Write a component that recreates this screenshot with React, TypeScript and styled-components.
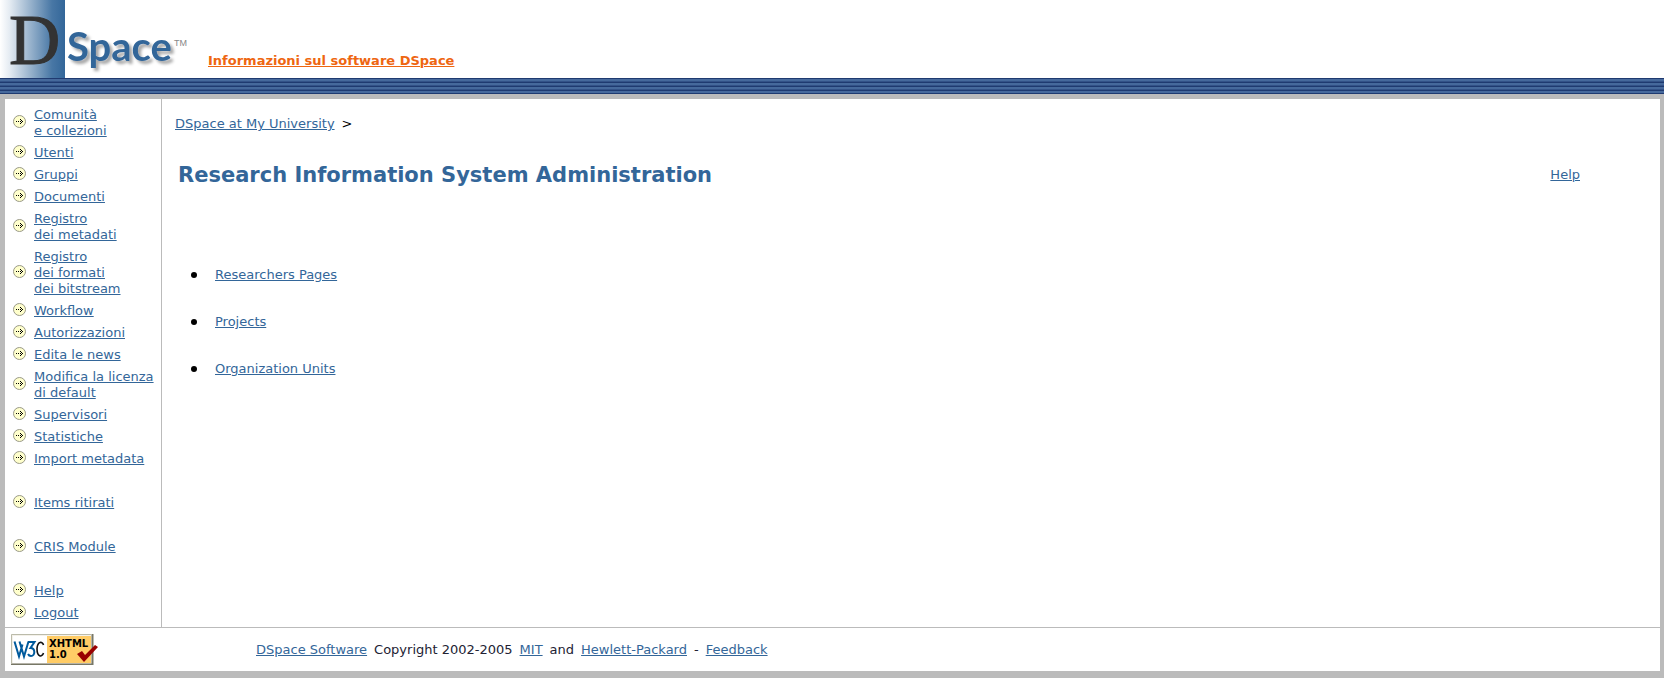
import React from "react";
import styled, { createGlobalStyle } from "styled-components";

const GlobalStyle = createGlobalStyle`
  body {
    margin: 0;
    background: #ffffff;
    color: #000000;
    font-family: Verdana, "DejaVu Sans", sans-serif;
    font-size: 13px;
    line-height: 16px;
  }
`;

const Link = styled.a`
  color: #336699;
  text-decoration: underline;
`;

const Header = styled.header`
  display: flex;
  align-items: flex-end;
  height: 78px;
`;

const Logo = styled.svg`
  display: block;
  flex: none;
  width: 208px;
  height: 78px;
`;

const Tagline = styled(Link)`
  margin-bottom: 9px;
  color: #ee6611;
  font-weight: bold;
`;

const Stripes = styled.div`
  box-sizing: border-box;
  height: 16px;
  border-bottom: 1px solid #1f3a70;
  background: repeating-linear-gradient(
    #1f3a70 0 1px,
    #46699c 1px 3px,
    #335288 3px 4px
  );
`;

const Frame = styled.div`
  border: solid #bbbbbb;
  border-width: 5px 4px 7px 5px;
`;

const Columns = styled.div`
  display: flex;
`;

const Sidebar = styled.nav`
  flex: none;
  box-sizing: border-box;
  width: 157px;
  padding: 5px 0 3px 8px;
  border-right: 1px solid #bbbbbb;
`;

const Menu = styled.ul`
  margin: 0;
  padding: 0;
  list-style: none;
`;

const MenuItem = styled.li<{ $spaced?: boolean }>`
  display: flex;
  align-items: center;
  gap: 8px;
  padding: 3px 0;
  margin-top: ${(p) => (p.$spaced ? 22 : 0)}px;
`;

const MenuLink = styled(Link)`
  white-space: pre-line;
`;

const Bullet = styled.svg`
  display: block;
  flex: none;
  width: 13px;
  height: 13px;
  margin-bottom: 3px;
`;

const Main = styled.main`
  flex: 1;
  padding: 17px 80px 0 13px;
`;

const InlineParts = styled.p`
  display: flex;
  flex-wrap: wrap;
  column-gap: 7px;
  margin: 0;
`;

const TitleRow = styled.div`
  display: flex;
  align-items: center;
  justify-content: space-between;
  margin-top: 29px;
  padding-left: 3px;
`;

const Title = styled.h1`
  margin: 0;
  color: #336699;
  font-size: 21px;
  line-height: 28px;
`;

const Sections = styled.ul`
  display: grid;
  gap: 31px;
  margin: 78px 0 0;
  padding-left: 16px;
  list-style: none;
`;

const Section = styled.li`
  display: flex;
  align-items: center;
  gap: 18px;

  &::before {
    content: "";
    width: 6px;
    height: 6px;
    border-radius: 50%;
    background: #000000;
  }
`;

const Footer = styled.footer`
  display: flex;
  align-items: center;
  gap: 157px;
  height: 43px;
  padding-left: 6px;
  border-top: 1px solid #bbbbbb;
  color: #222233;
`;

const Badge = styled.svg`
  display: block;
  width: 88px;
  height: 31px;
`;

type Entry = { label: string; spaced?: boolean };

const entries: Entry[] = [
  { label: "Comunità\ne collezioni" },
  { label: "Utenti" },
  { label: "Gruppi" },
  { label: "Documenti" },
  { label: "Registro\ndei metadati" },
  { label: "Registro\ndei formati\ndei bitstream" },
  { label: "Workflow" },
  { label: "Autorizzazioni" },
  { label: "Edita le news" },
  { label: "Modifica la licenza\ndi default" },
  { label: "Supervisori" },
  { label: "Statistiche" },
  { label: "Import metadata" },
  { label: "Items ritirati", spaced: true },
  { label: "CRIS Module", spaced: true },
  { label: "Help", spaced: true },
  { label: "Logout" },
];

const sections = ["Researchers Pages", "Projects", "Organization Units"];

const DSpaceLogo = () => (
  <Logo viewBox="0 0 208 78" role="img" aria-label="DSpace">
    <defs>
      <linearGradient id="fade">
        <stop offset="0" stopColor="#ffffff" />
        <stop offset="0.15" stopColor="#e4ebf2" />
        <stop offset="0.8" stopColor="#4877a5" />
        <stop offset="1" stopColor="#336699" />
      </linearGradient>
      <filter id="shadow" x="-10%" y="-10%" width="130%" height="140%">
        <feDropShadow dx="3" dy="3" stdDeviation="1.5" floodColor="#000000" floodOpacity="0.35" />
      </filter>
    </defs>
    <rect width="65" height="78" fill="url(#fade)" />
    <text x="9" y="64" fontFamily="Liberation Serif, serif" fontSize="71" fill="#333333" stroke="#333333">
      D
    </text>
    <text
      x="67"
      y="61"
      fontFamily="Lato, sans-serif"
      fontSize="40"
      fontWeight="bold"
      fill="#336699"
      filter="url(#shadow)"
    >
      Space
    </text>
    <text x="174" y="46" fontFamily="Liberation Sans, sans-serif" fontSize="9" fill="#888888">
      TM
    </text>
  </Logo>
);

const ArrowBullet = () => (
  <Bullet viewBox="0 0 13 13" aria-hidden="true">
    <circle cx="6.5" cy="6.5" r="6" fill="#ffffcc" stroke="#999988" />
    <path
      d="M3 6h1v1H3zM5 6h1v1H5zM7 6h1v1H7zM9 6h1v1H9zM7 4h1v1H7zM8 5h1v1H8zM8 7h1v1H8zM7 8h1v1H7z"
      fill="#000000"
    />
  </Bullet>
);

const XhtmlBadge = () => (
  <Badge viewBox="0 0 88 31" role="img" aria-label="Valid XHTML 1.0">
    <rect width="82" height="31" fill="#f4f1ea" />
    <path d="M0 30.5h82M81.5 0v31" stroke="#777766" strokeWidth="2" fill="none" />
    <path d="M.5 30V.5H81" stroke="#bbbbaa" fill="none" />
    <rect x="2" y="2" width="34" height="27" fill="#ffffff" />
    <rect x="36" y="2" width="44" height="27" fill="#ffcc66" />
    <path d="M3.500 7.500l4.500 15 3.500-12M8.500 7.500l4.500 15 4.500-15" stroke="#005a9c" strokeWidth="2" fill="none" />
    <path d="M17 8h6.500l-4 6c5 0 5 8 .5 8-2 0-2.500-1-3-2" stroke="#005a9c" strokeWidth="2" fill="none" />
    <path d="M32.500 11c-1-4-6-4-6.500 3.500 0 9 5 9 6.500 4.500" stroke="#111111" strokeWidth="1.600" fill="none" />
    <g fontFamily="DejaVu Sans, sans-serif" fontSize="10" fontWeight="bold" fill="#000000">
      <text x="38" y="13">XHTML</text>
      <text x="38" y="24">1.0</text>
    </g>
    <path d="M66 20l5-3 3 4 10-10 3 2-14 15z" fill="#990000" />
  </Badge>
);

export default function App() {
  return (
    <>
      <GlobalStyle />
      <Header>
        <DSpaceLogo />
        <Tagline href="#about">Informazioni sul software DSpace</Tagline>
      </Header>
      <Stripes />
      <Frame>
        <Columns>
          <Sidebar>
            <Menu>
              {entries.map((entry) => (
                <MenuItem key={entry.label} $spaced={entry.spaced}>
                  <ArrowBullet />
                  <MenuLink href="#menu">{entry.label}</MenuLink>
                </MenuItem>
              ))}
            </Menu>
          </Sidebar>
          <Main>
            <InlineParts>
              <Link href="#home">DSpace at My University</Link>
              <span>&gt;</span>
            </InlineParts>
            <TitleRow>
              <Title>Research Information System Administration</Title>
              <Link href="#help">Help</Link>
            </TitleRow>
            <Sections>
              {sections.map((name) => (
                <Section key={name}>
                  <Link href="#section">{name}</Link>
                </Section>
              ))}
            </Sections>
          </Main>
        </Columns>
        <Footer>
          <a href="#xhtml">
            <XhtmlBadge />
          </a>
          <InlineParts>
            <Link href="#software">DSpace Software</Link>
            <span>Copyright 2002-2005</span>
            <Link href="#mit">MIT</Link>
            <span>and</span>
            <Link href="#hp">Hewlett-Packard</Link>
            <span>-</span>
            <Link href="#feedback">Feedback</Link>
          </InlineParts>
        </Footer>
      </Frame>
    </>
  );
}
